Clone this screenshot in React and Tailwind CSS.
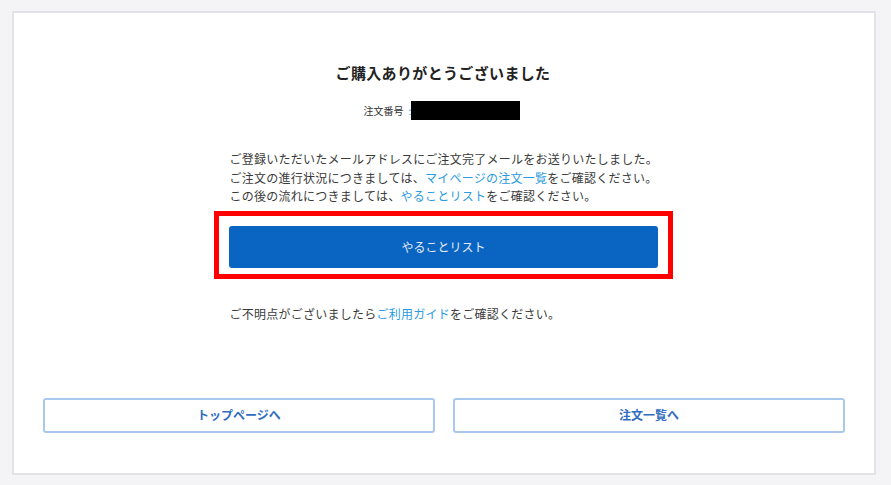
import React from 'react';

const jp = { fontFamily: '"Noto Sans CJK JP", "Noto Sans", sans-serif' };

export default function App() {
    return (
        <div className="w-[891px] h-[485px] bg-[#f4f4f6] pt-[11px] pl-[12px]" style={jp}>
            <div className="w-[864px] h-[464px] bg-white border-2 border-[#e2e3e8] flex flex-col items-center pt-[49px]">
                {/* title */}
                <h1 className="text-[15px] leading-[22px] font-bold text-[#222] tracking-[0.35px] ml-[-2px]">ご購入ありがとうございました</h1>

                {/* order number */}
                <div className="mt-[16px] h-[20px] flex items-center text-[10px] text-[#333] ml-[-4px]">
                    <span>注文番号</span>
                    <span className="ml-[5px] text-[#2a9be0]">:</span>
                    <span className="w-[109px] h-[19px] bg-black ml-[0px]"></span>
                </div>

                {/* message */}
                <div className="mt-[30px] w-[431px] ml-[2px] text-[12px] leading-[18.5px] text-[#3a3a3a] tracking-[0.25px]">
                    <p>ご登録いただいたメールアドレスにご注文完了メールをお送りいたしました。</p>
                    <p>ご注文の進行状況につきましては、<span className="text-[#2a9be0]">マイページの注文一覧</span>をご確認ください。</p>
                    <p>この後の流れにつきましては、<span className="text-[#2a9be0]">やることリスト</span>をご確認ください。</p>
                </div>

                {/* highlighted todo button */}
                <div className="mt-[5px] w-[459px] h-[68px] border-[5px] border-[#ff0000] px-[10px] pt-[10px] ml-[-1px]">
                    <button className="w-[429px] h-[42px] bg-[#0a64c2] rounded-[3px] text-[12px] text-[#e3ebf7]">
                        やることリスト
                    </button>
                </div>

                <p className="mt-[26px] w-[431px] ml-[2px] text-[12px] leading-[18px] text-[#3a3a3a] tracking-[0.25px]">
                    ご不明点がございましたら<span className="text-[#2a9be0]">ご利用ガイド</span>をご確認ください。
                </p>

                {/* bottom links */}
                <div className="mt-[75px] w-full px-[29px] flex gap-[18px]">
                    <button className="flex-1 h-[35px] border-2 border-[#a9c8ee] rounded-[3px] text-[12px] font-bold text-[#2f6cc0]">
                        トップページへ
                    </button>
                    <button className="flex-1 h-[35px] border-2 border-[#a9c8ee] rounded-[3px] text-[12px] font-bold text-[#2f6cc0]">
                        注文一覧へ
                    </button>
                </div>
            </div>
        </div>
    );
}
